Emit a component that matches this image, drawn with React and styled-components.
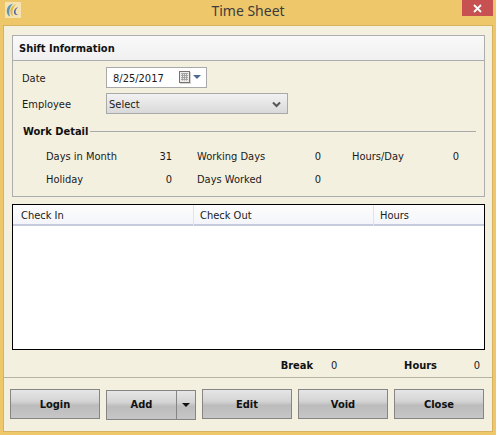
import React from 'react';
import styled, { createGlobalStyle } from 'styled-components';

const uiFont = '"DejaVu Sans Condensed", "Noto Sans", "Liberation Sans", sans-serif';

const Global = createGlobalStyle`
  html, body { margin: 0; padding: 0; background: #efc76b; }
  * { box-sizing: border-box; }
`;

const Window = styled.div`
  width: 496px;
  height: 435px;
  background: #efc76b;
  padding: 0 3px 3px 3px;
  display: flex;
  flex-direction: column;
  font-family: ${uiFont};
  font-size: 11px;
  color: #1a1a1a;
`;

const TitleBar = styled.div`
  height: 25px;
  flex: none;
  display: flex;
  align-items: flex-start;
`;

const Logo = styled.svg`
  width: 16px;
  height: 16px;
  margin: 2px 0 0 2px;
  flex: none;
`;

const Title = styled.div`
  flex: 1;
  text-align: center;
  font-family: "Noto Sans", "Liberation Sans", sans-serif;
  font-size: 14px;
  line-height: 22px;
  color: #3c3c3c;
  padding-left: 13px;
`;

const CloseBox = styled.div`
  width: 31px;
  height: 16px;
  background: #c75050;
  display: flex;
  align-items: center;
  justify-content: center;
`;

const Body = styled.div`
  flex: 1;
  background: #f4f0e0;
  border: 1px solid #d9b25f;
  display: flex;
  flex-direction: column;
`;

const Main = styled.div`
  flex: 1;
  padding: 9px 7px 0 8px;
  display: flex;
  flex-direction: column;
`;

const Panel = styled.section`
  height: 162px;
  border: 1px solid #adadad;
  flex: none;
`;

const PanelHead = styled.div`
  height: 25px;
  border-bottom: 1px solid #adadad;
  background: linear-gradient(#f9f9f9, #f0f0f0);
  font-weight: bold;
  color: #111;
  line-height: 25px;
  padding-left: 6px;
`;

const PanelBody = styled.div`
  padding: 6px 8px 0 9px;
`;

const FormRow = styled.div`
  display: flex;
  align-items: center;
  height: 20px;
  margin-bottom: 6px;
`;

const FormLabel = styled.div`
  width: 84px;
  padding-top: 2px;
`;

const DateBox = styled.div`
  width: 101px;
  height: 21px;
  border: 1px solid #a9a9a9;
  background: #fff;
  display: flex;
  align-items: center;
  justify-content: space-between;
  padding: 2px 5px 0 6px;
`;

const SelectBox = styled.div`
  width: 182px;
  height: 21px;
  border: 1px solid #a9a9a9;
  background: linear-gradient(#f2f2f2, #d9d9d9);
  display: flex;
  align-items: center;
  justify-content: space-between;
  padding: 2px 6px 0 2px;
`;

const Legend = styled.div`
  display: flex;
  align-items: center;
  gap: 2px;
  margin: 11px 0 0 1px;
  font-weight: bold;
  color: #111;
  height: 14px;
`;

const LegendLine = styled.div`
  flex: 1;
  height: 1px;
  background: #a9a9a9;
`;

const DetailGrid = styled.div`
  display: grid;
  grid-template-columns: 100px 26px 124px 25px 107px 31px;
  grid-auto-rows: 23px;
  align-items: center;
  margin: 7px 0 0 24px;
`;

const DetailLabel = styled.div`
  padding-left: ${(p) => p.$pad || 0}px;
`;

const Num = styled.div`
  text-align: right;
`;

const TableWrap = styled.div`
  margin-top: 7px;
  height: 146px;
  border: 1px solid #000;
  background: #fff;
  flex: none;
`;

const TableHead = styled.div`
  display: grid;
  grid-template-columns: 181px 180px 1fr;
  height: 21px;
  background: linear-gradient(#fdfdfd, #f3f5fa);
  border-bottom: 2px solid #c5cbdc;
`;

const HeadCell = styled.div`
  padding-left: ${(p) => p.$pad}px;
  line-height: 21px;
  border-right: ${(p) => (p.$last ? 'none' : '1px solid #e0e4ef')};
`;

const Totals = styled.div`
  display: flex;
  justify-content: flex-end;
  align-items: center;
  height: 27px;
  padding: 3px 5px 0 0;
`;

const TotalLabel = styled.div`
  font-weight: bold;
  color: #111;
`;

const TotalValue = styled.div`
  width: ${(p) => p.$w}px;
  padding-left: ${(p) => p.$pad}px;
  text-align: ${(p) => p.$align};
`;

const Footer = styled.div`
  height: 54px;
  flex: none;
  border-top: 1px solid #b5b2a6;
  display: flex;
  gap: 6px;
  padding: 11px 0 0 6px;
`;

const buttonFill = 'linear-gradient(#e6e6e6 0%, #d4d4d4 40%, #bcbcbc 55%, #c6c6c6 100%)';

const Button = styled.button`
  width: 90px;
  height: 30px;
  border: 1px solid #858585;
  background: ${buttonFill};
  font: bold 11px ${uiFont};
  color: #111;
  padding: 0;
`;

const SplitButton = styled.div`
  width: 90px;
  height: 30px;
  margin-top: 1px;
  display: flex;
  border: 1px solid #858585;
  background: ${buttonFill};
  font-weight: bold;
  color: #111;
`;

const SplitMain = styled.div`
  flex: 1;
  text-align: center;
  line-height: 28px;
  border-right: 1px solid #858585;
`;

const SplitArrow = styled.div`
  width: 18px;
  display: flex;
  align-items: center;
  justify-content: center;
`;

const Caret = styled.div`
  width: 0;
  height: 0;
  border-left: 4px solid transparent;
  border-right: 4px solid transparent;
  border-top: 4px solid ${(p) => p.$color || '#111'};
`;

const DateIcons = styled.div`
  display: flex;
  align-items: center;
  gap: 1px;
  margin-top: -2px;
`;

const App = () => (
  <Window>
    <Global />
    <TitleBar>
      <Logo viewBox="0 0 16 16">
        <rect width="16" height="16" fill="#f4e2b0" />
        <path d="M8 1.5C3 3 1 7 2 11c.5 1.5 1.5 3 3 3.5C3.5 10 4.5 5 8 1.5z" fill="#5b97b8" />
        <path d="M11 2C7 3.5 5 7 5.5 10.5c.3 1.5 1 3 2.5 3.5C6.5 9.5 8 5 11 2z" fill="#e2b63c" />
        <path d="M13 5c-3 1-4.500 3.500-4 6 .3 1.300 2 2.500 5 2-2 0-3.500-1-3.500-3 0-2 1-3.500 2.500-5z" fill="#4c5fa8" />
      </Logo>
      <Title>Time Sheet</Title>
      <CloseBox>
        <svg width="9" height="9" viewBox="0 0 9 9">
          <path d="M1 1l7 7M8 1L1 8" stroke="#fff" strokeWidth="1.8" />
        </svg>
      </CloseBox>
    </TitleBar>
    <Body>
      <Main>
        <Panel>
          <PanelHead>Shift Information</PanelHead>
          <PanelBody>
            <FormRow>
              <FormLabel>Date</FormLabel>
              <DateBox>
                8/25/2017
                <DateIcons>
                  <svg width="13" height="13" viewBox="0 0 13 13">
                    <rect x="1" y="1" width="11" height="12" fill="#d5d2cf" />
                    <rect x="0.5" y="0.5" width="10" height="11" fill="#ececec" stroke="#7a7270" />
                    <path d="M2 2.500h7M2 4.500h7M2 6.500h7M2 8.500h7M3.500 2v7.500M5.500 2v7.500M7.500 2v7.500" stroke="#a2a2a2" strokeWidth="1" />
                  </svg>
                  <Caret $color="#4f6a90" />
                </DateIcons>
              </DateBox>
            </FormRow>
            <FormRow>
              <FormLabel>Employee</FormLabel>
              <SelectBox>
                Select
                <svg width="9" height="7" viewBox="0 0 9 7">
                  <path d="M1 1.500l3.500 3.500L8 1.500" fill="none" stroke="#555" strokeWidth="2" />
                </svg>
              </SelectBox>
            </FormRow>
            <Legend>
              Work Detail
              <LegendLine />
            </Legend>
            <DetailGrid>
              <DetailLabel>Days in Month</DetailLabel>
              <Num>31</Num>
              <DetailLabel $pad={25}>Working Days</DetailLabel>
              <Num>0</Num>
              <DetailLabel $pad={31}>Hours/Day</DetailLabel>
              <Num>0</Num>
              <DetailLabel>Holiday</DetailLabel>
              <Num>0</Num>
              <DetailLabel $pad={25}>Days Worked</DetailLabel>
              <Num>0</Num>
            </DetailGrid>
          </PanelBody>
        </Panel>
        <TableWrap>
          <TableHead>
            <HeadCell $pad={8}>Check In</HeadCell>
            <HeadCell $pad={6}>Check Out</HeadCell>
            <HeadCell $pad={6} $last>Hours</HeadCell>
          </TableHead>
        </TableWrap>
        <Totals>
          <TotalLabel>Break</TotalLabel>
          <TotalValue $w={91} $pad={18} $align="left">0</TotalValue>
          <TotalLabel>Hours</TotalLabel>
          <TotalValue $w={43} $pad={0} $align="right">0</TotalValue>
        </Totals>
      </Main>
      <Footer>
        <Button>Login</Button>
        <SplitButton>
          <SplitMain>Add</SplitMain>
          <SplitArrow><Caret /></SplitArrow>
        </SplitButton>
        <Button>Edit</Button>
        <Button>Void</Button>
        <Button>Close</Button>
      </Footer>
    </Body>
  </Window>
);

export default App;
